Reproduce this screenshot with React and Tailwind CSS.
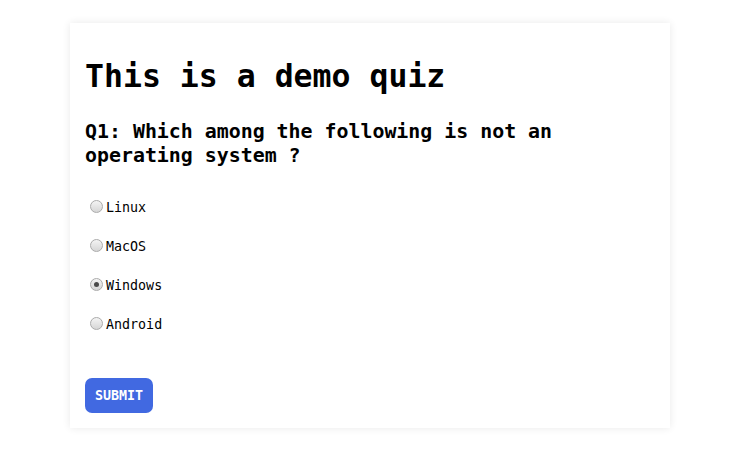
import { useState } from 'react'

const OPTIONS = ['Linux', 'MacOS', 'Windows', 'Android']

function Radio({ checked }) {
  return (
    <span className="ml-[5px] mr-[3px] flex h-[13px] w-[13px] shrink-0 items-center justify-center rounded-full border border-[#ababab] bg-gradient-to-b from-[#f4f4f4] to-[#d6d6d6]">
      {checked && <span className="h-[5px] w-[5px] rounded-full bg-[#4a4a4a]" />}
    </span>
  )
}

export default function App() {
  const [answer, setAnswer] = useState('Windows')

  return (
    <div className="min-h-[450px] w-[740px] bg-white pt-[23px] font-['DejaVu_Sans_Mono',monospace] text-black">
      <div className="mx-auto w-[600px] bg-white px-[15px] pt-[35px] pb-[15px] shadow-[0_0_8px_rgba(0,0,0,0.09)]">
        <h1 className="text-[31.5px] leading-[37px] font-bold">This is a demo quiz</h1>

        <h2 className="mt-[25px] text-[19.9px] leading-[24px] font-bold">
          Q1: Which among the following is not an operating system ?
        </h2>

        {/* answer options */}
        <div className="mt-[19px] flex flex-col">
          {OPTIONS.map(opt => (
            <label
              key={opt}
              onClick={() => setAnswer(opt)}
              className="flex h-[39px] cursor-pointer items-center text-[13.33px]"
            >
              <Radio checked={answer === opt} />
              <span className="pt-[3px]">{opt}</span>
            </label>
          ))}
        </div>

        <button className="mt-[35px] h-[35px] rounded-[7px] bg-[#4169e1] px-[10px] text-[13.33px] font-bold text-white">
          SUBMIT
        </button>
      </div>
    </div>
  )
}
